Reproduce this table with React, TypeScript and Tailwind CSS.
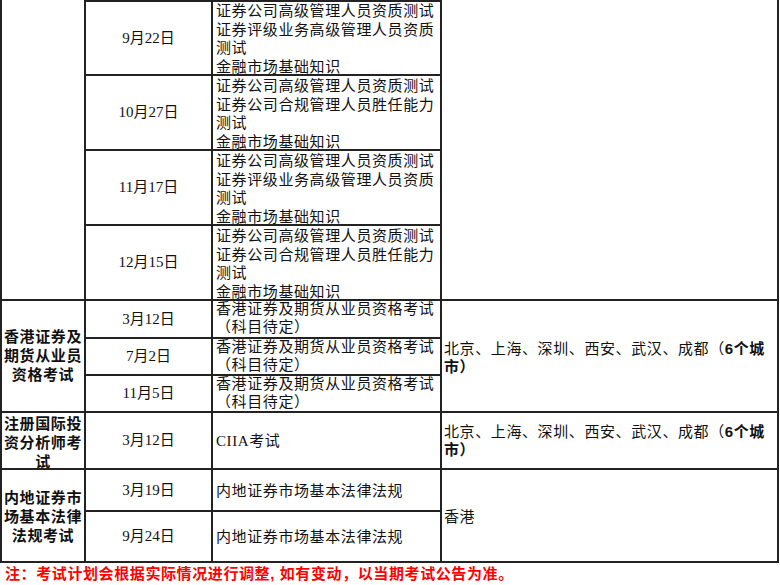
import { Fragment } from "react";

const line = "border-r-2 border-b-2 border-[#222] overflow-hidden";

interface IDateRow {
    date: string;
    items: string[];
}

function DateCell({ date, first = false }: { date: string; first?: boolean }) {
    return (
        <div className={`${line} ${first && 'border-t-2'} flex items-center justify-center text-[15px]`}>
            {date}
        </div>
    )
}

function SubjectCell({ items, first = false }: { items: string[]; first?: boolean }) {
    return (
        <div className={`${line} ${first ? 'border-t-2 pt-0' : 'pt-[1px]'} pl-[3px] text-[15px] tracking-[0.6px] leading-[18.7px]`}>
            {items.map((t, i) => <div key={i}>{t}</div>)}
        </div>
    )
}

const gao = "证券公司高级管理人员资质测试"
const jichu = "金融市场基础知识"

const securities: IDateRow[] = [
    { date: "9月22日", items: [gao, "证券评级业务高级管理人员资质测试", jichu] },
    { date: "10月27日", items: [gao, "证券公司合规管理人员胜任能力测试", jichu] },
    { date: "11月17日", items: [gao, "证券评级业务高级管理人员资质测试", jichu] },
    { date: "12月15日", items: [gao, "证券公司合规管理人员胜任能力测试", jichu] },
]

const hkDates = ["3月12日", "7月2日", "11月5日"]

function HkSubject() {
    return (
        <div className={`${line} pl-[3px] text-[15px] tracking-[0.6px] leading-[17.5px]`}>
            <div>香港证券及期货从业员资格考试</div>
            <div>（科目待定）</div>
        </div>
    )
}

function SixCities({ extra = '' }: { extra?: string }) {
    return (
        <div className={`${line} ${extra} flex items-center pl-[2px] pr-[4px] text-[15px] tracking-[0.6px] leading-[18px]`}>
            <p>
                北京、上海、深圳、西安、武汉、成都（
                <span className="font-bold font-['Liberation_Sans','Noto_Sans_CJK_SC',sans-serif]">6个城市）</span>
            </p>
        </div>
    )
}

export default function App() {
    return (
        <div className="w-[780px] h-[585px] bg-white overflow-hidden text-[#111] font-['Liberation_Serif','Noto_Sans_CJK_SC',serif]">
            <div className="grid grid-cols-[84px_127px_229px_337px] grid-rows-[76px_75px_75px_75px_38px_37px_37px_57px_42px_51px] border-l-2 border-[#222] w-[779px]">
                {/* 证券类 (上方延续) */}
                <div className={`${line} row-span-4`}></div>
                <DateCell date={securities[0].date} first />
                <SubjectCell items={securities[0].items} first />
                <div className={`${line} row-span-4`}></div>
                {securities.slice(1).map((r) => (
                    <Fragment key={r.date}>
                        <DateCell date={r.date} />
                        <SubjectCell items={r.items} />
                    </Fragment>
                ))}

                {/* 香港证券及期货从业员资格考试 */}
                <div className={`${line} row-span-3 flex items-center justify-center text-center font-bold text-[15px] tracking-[0.6px] leading-[19px]`}>
                    香港证券及期货从业员资格考试
                </div>
                <DateCell date={hkDates[0]} />
                <HkSubject />
                <SixCities extra="row-span-3 pt-[4px]" />
                {hkDates.slice(1).map((d) => (
                    <Fragment key={d}>
                        <DateCell date={d} />
                        <HkSubject />
                    </Fragment>
                ))}

                {/* 注册国际投资分析师考试 */}
                <div className={`${line} pt-[2px] text-center font-bold text-[15px] tracking-[0.6px] leading-[19px]`}>
                    注册国际投资分析师考试
                </div>
                <DateCell date="3月12日" />
                <div className={`${line} flex items-center pt-[2px] pl-[3px] text-[15px] tracking-[0.6px]`}>CIIA考试</div>
                <SixCities />

                {/* 内地证券市场基本法律法规考试 */}
                <div className={`${line} row-span-2 flex items-center justify-center pt-[3px] text-center font-bold text-[15px] tracking-[0.6px] leading-[19px]`}>
                    内地证券市场基本法律法规考试
                </div>
                <DateCell date="3月19日" />
                <div className={`${line} flex items-center pt-[2px] pl-[3px] text-[15px] tracking-[0.6px]`}>内地证券市场基本法律法规</div>
                <div className={`${line} row-span-2 flex items-center pt-[3px] pl-[2px] text-[15px] tracking-[0.6px]`}>香港</div>
                <DateCell date="9月24日" />
                <div className={`${line} flex items-center pt-[2px] pl-[3px] text-[15px] tracking-[0.6px]`}>内地证券市场基本法律法规</div>
            </div>

            <p className="pl-[5px] text-[15px] leading-[22px] tracking-[0.6px] font-bold text-[#ff0000] font-['Liberation_Sans','Noto_Sans_CJK_SC',sans-serif]">
                注：考试计划会根据实际情况进行调整, 如有变动，以当期考试公告为准。
            </p>
        </div>
    )
}
